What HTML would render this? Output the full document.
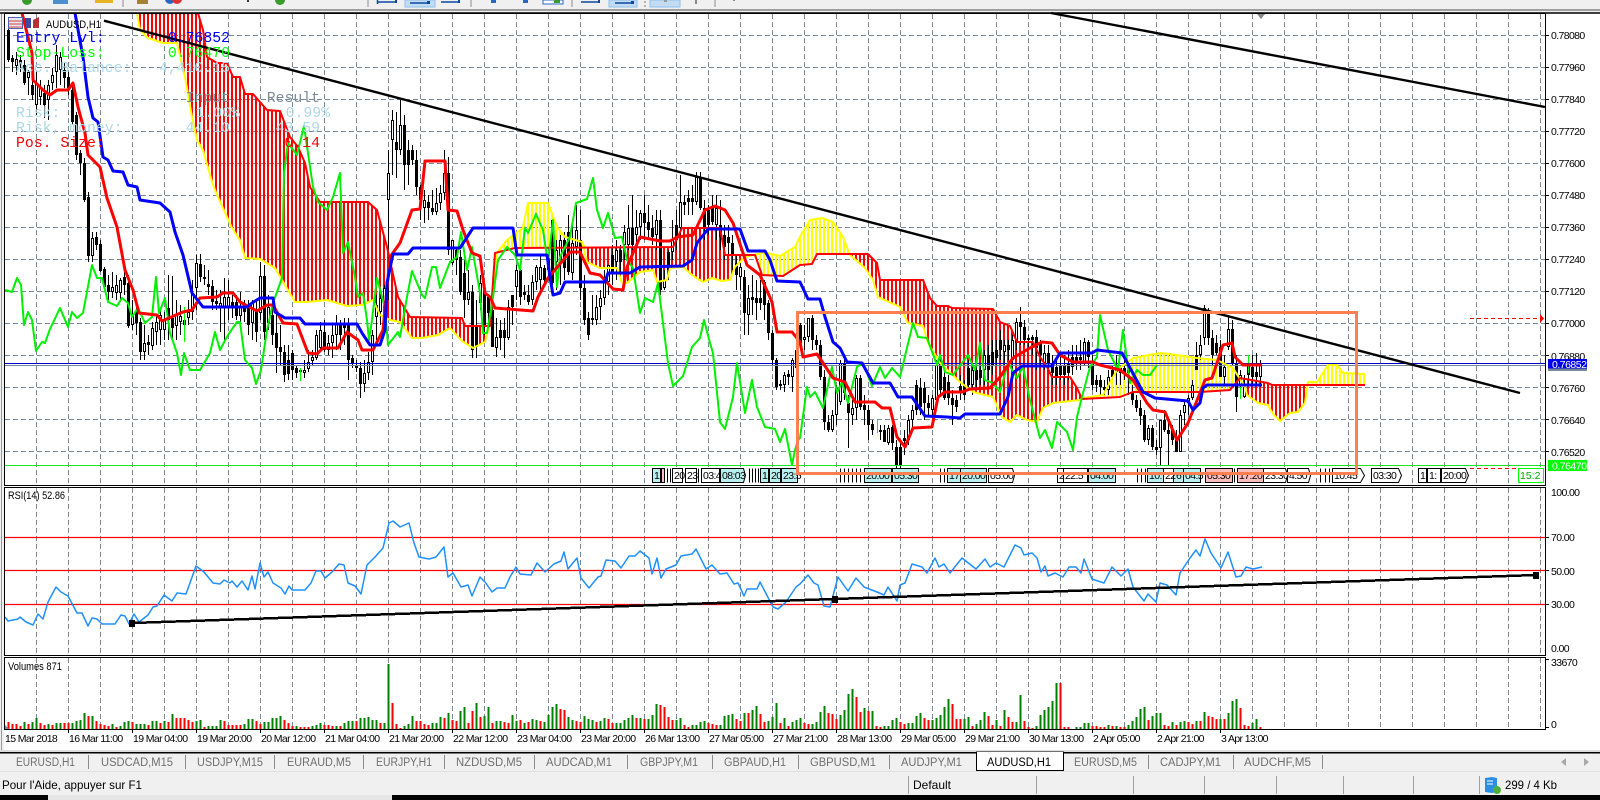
<!DOCTYPE html>
<html><head><meta charset="utf-8"><title>AUDUSD,H1</title>
<style>
html,body{margin:0;padding:0;background:#fff;width:1600px;height:800px;overflow:hidden}
svg{position:absolute;left:0;top:0;display:block}
text{font-family:"Liberation Sans",sans-serif;font-size:10px;fill:#000}
.l{fill:none;stroke-linejoin:round}
.m{font-family:"Liberation Mono",monospace;font-size:14.8px}
.a text{font-size:10.5px;letter-spacing:-.62px}
.t{font-size:11.5px;fill:#6f6f6f}
.b text{font-size:10.5px;letter-spacing:-.6px}
</style></head><body>
<svg width="1600" height="800" viewBox="0 0 1600 800" xmlns="http://www.w3.org/2000/svg">
<defs>
<pattern id="hr" patternUnits="userSpaceOnUse" x="7" y="0" width="4" height="8"><rect width="2" height="8" fill="#f00"/></pattern>
<pattern id="hy" patternUnits="userSpaceOnUse" x="7" y="0" width="4" height="8"><rect width="2" height="8" fill="#ff0"/></pattern>
</defs>
<!-- toolbar -->
<rect width="1600" height="10" fill="#f0f0f0"/>
<rect y="9" width="1600" height="2" fill="#a0a0a0"/>
<rect y="11" width="1600" height="2" fill="#f0f0f0"/>
<g>
<circle cx="27" cy="0" r="5" fill="#3a9a2a"/><rect x="53" y="0" width="15" height="4" fill="#4c8fcb"/><rect x="95" y="0" width="18" height="3" fill="#e6b422"/>
<rect x="137" y="0" width="11" height="4" fill="#a5822f"/><circle cx="170" cy="-1" r="5" fill="#2a66c8"/><circle cx="177" cy="-1" r="5" fill="#d33"/><circle cx="280" cy="0" r="5" fill="#3a9a2a"/>
<rect x="247" y="0" width="2" height="2" fill="#333"/>
<path d="M123 0v7M368 0v7M471 0v7M572 0v7M715 0v7" stroke="#8c8c8c" stroke-width="1"/>
<rect x="405" y="0" width="30" height="7" fill="#c3dcf3" stroke="#8fc1ee"/><rect x="609" y="0" width="28" height="7" fill="#c3dcf3" stroke="#8fc1ee"/><rect x="650" y="0" width="30" height="7" fill="#c3dcf3" stroke="#8fc1ee"/>
<path d="M378 2h19M377.500 0v4M410 3h19M441 2h19M581 2h19M615 3h18" stroke="#0d47a1" stroke-width="1.500"/>
<rect x="395" y="0" width="2" height="3" fill="#0d47a1"/><rect x="427" y="1" width="3" height="3" fill="#0d47a1"/><rect x="458" y="0" width="2" height="3" fill="#0d47a1"/><rect x="598" y="0" width="2" height="3" fill="#0d47a1"/><rect x="631" y="1" width="3" height="3" fill="#0d47a1"/>
<rect x="491" y="0" width="5" height="3" fill="#2a66c8"/><rect x="523" y="0" width="5" height="3" fill="#2a66c8"/><rect x="543" y="0" width="20" height="4" fill="#fff" stroke="#2a66c8"/><rect x="554" y="0" width="6" height="3" fill="#3a9a2a"/>
<rect x="644" y="1" width="2" height="2" fill="#b5b5b5"/><rect x="644" y="5" width="2" height="2" fill="#b5b5b5"/><rect x="664" y="0" width="3" height="2" fill="#999"/><rect x="695" y="0" width="2" height="4" fill="#888"/><rect x="733" y="0" width="2" height="1" fill="#888"/>
</g>
<rect y="13" width="4" height="740" fill="#f0f0f0"/><rect x="1" y="13" width="1" height="740" fill="#9a9a9a"/>
<!-- grid -->
<path d="M36.500 14V485M68.500 14V485M100.500 14V485M132.500 14V485M164.500 14V485M196.500 14V485M228.500 14V485M260.500 14V485M292.500 14V485M324.500 14V485M356.500 14V485M388.500 14V485M420.500 14V485M452.500 14V485M484.500 14V485M516.500 14V485M548.500 14V485M580.500 14V485M612.500 14V485M644.500 14V485M676.500 14V485M708.500 14V485M740.500 14V485M772.500 14V485M804.500 14V485M836.500 14V485M868.500 14V485M900.500 14V485M932.500 14V485M964.500 14V485M996.500 14V485M1028.500 14V485M1060.500 14V485M1092.500 14V485M1124.500 14V485M1156.500 14V485M1188.500 14V485M1220.500 14V485M1252.500 14V485M1284.500 14V485M1316.500 14V485M1348.500 14V485M1380.500 14V485M1412.500 14V485M1444.500 14V485M1476.500 14V485M1508.500 14V485M1540.500 14V485
M36.500 488V655M68.500 488V655M100.500 488V655M132.500 488V655M164.500 488V655M196.500 488V655M228.500 488V655M260.500 488V655M292.500 488V655M324.500 488V655M356.500 488V655M388.500 488V655M420.500 488V655M452.500 488V655M484.500 488V655M516.500 488V655M548.500 488V655M580.500 488V655M612.500 488V655M644.500 488V655M676.500 488V655M708.500 488V655M740.500 488V655M772.500 488V655M804.500 488V655M836.500 488V655M868.500 488V655M900.500 488V655M932.500 488V655M964.500 488V655M996.500 488V655M1028.500 488V655M1060.500 488V655M1092.500 488V655M1124.500 488V655M1156.500 488V655M1188.500 488V655M1220.500 488V655M1252.500 488V655M1284.500 488V655M1316.500 488V655M1348.500 488V655M1380.500 488V655M1412.500 488V655M1444.500 488V655M1476.500 488V655M1508.500 488V655M1540.500 488V655
M36.500 658V729M68.500 658V729M100.500 658V729M132.500 658V729M164.500 658V729M196.500 658V729M228.500 658V729M260.500 658V729M292.500 658V729M324.500 658V729M356.500 658V729M388.500 658V729M420.500 658V729M452.500 658V729M484.500 658V729M516.500 658V729M548.500 658V729M580.500 658V729M612.500 658V729M644.500 658V729M676.500 658V729M708.500 658V729M740.500 658V729M772.500 658V729M804.500 658V729M836.500 658V729M868.500 658V729M900.500 658V729M932.500 658V729M964.500 658V729M996.500 658V729M1028.500 658V729M1060.500 658V729M1092.500 658V729M1124.500 658V729M1156.500 658V729M1188.500 658V729M1220.500 658V729M1252.500 658V729M1284.500 658V729M1316.500 658V729M1348.500 658V729M1380.500 658V729M1412.500 658V729M1444.500 658V729M1476.500 658V729M1508.500 658V729M1540.500 658V729" stroke="#778899" stroke-width="1" stroke-dasharray="5 3" fill="none"/>
<path d="M5 35.500H1545M5 67.500H1545M5 99.500H1545M5 131.500H1545M5 163.500H1545M5 195.500H1545M5 227.500H1545M5 259.500H1545M5 291.500H1545M5 323.500H1545M5 355.500H1545M5 387.500H1545M5 419.500H1545M5 451.500H1545" stroke="#778899" stroke-width="1" stroke-dasharray="5 3" fill="none"/>
<!-- cloud hatch -->
<polygon fill="url(#hr)" points="137,14 198,14 203,30 207,57 217,63 227,63 233,77 240,77 245,94 253,94 267,110 280,111 290,137 298,147 305,163 310,187 320,202 368,202 377,210 387,247 398,297 410,317 462,318 465,326 490,326 485,342 473,348 462,341 450,328 438,335 422,338 412,338 400,322 390,320 380,315 373,300 362,305 347,306 327,300 307,302 295,302 282,280 275,268 260,259 245,258 240,240 232,228 218,197 213,185 203,150 197,140 192,117 185,77 177,43 163,43 148,38 140,30"/>
<polygon fill="url(#hy)" points="497,253 507,240 523,228 528,203 548,203 557,227 565,237 582,242 587,248 515,248"/>
<polygon fill="url(#hr)" points="587,248 673,247 682,228 720,228 725,255 745,255 745,257 735,267 730,280 722,281 712,278 703,282 692,275 683,267 670,268 667,280 657,282 653,270 640,272 627,283 622,283 617,268 600,268 587,262"/>
<polygon fill="url(#hy)" points="745,257 762,253 767,253 780,256 795,247 800,237 810,220 822,218 833,222 843,237 850,254 817,254 812,264 800,265 783,276 762,275 755,255"/>
<polygon fill="url(#hr)" points="850,254 868,254 877,263 880,280 923,280 930,298 937,306 948,306 952,308 993,309 1000,322 1010,326 1017,342 1033,342 1040,357 1047,367 1052,377 1070,377 1077,388 1082,399 1053,403 1043,408 1037,422 1027,420 1017,415 1010,422 1002,417 993,397 973,392 960,382 940,363 928,343 923,326 908,323 900,307 878,297 873,280 865,268"/>
<polygon fill="url(#hy)" points="1083,398 1103,395 1117,370 1133,358 1160,353 1170,354 1197,358 1217,360 1233,368 1243,382 1230,390 1200,392 1133,392 1120,397"/>
<polygon fill="url(#hr)" points="1240,378 1268,383 1272,385 1308,385 1308,387 1305,403 1298,412 1290,413 1280,421 1273,414 1268,405 1258,403 1247,395 1245,387"/>
<polygon fill="url(#hy)" points="1308,382 1317,382 1328,365 1337,365 1343,373 1365,374 1365,385 1308,385"/>
<!-- candles -->
<g transform="translate(.5,0)" shape-rendering="crispEdges">
<path fill="none" stroke="#000" stroke-width="1" d="M8 28V62M12 55V72M16 52V75M20 55V72M24 60V85M28 70V95M32 75V100M36 72V115M40 80V105M44 85V118M48 80V120M52 68V90M56 45V88M60 52V85M64 62V88M68 72V95M72 85V125M76 112V160M80 150V175M84 158V202M88 192V262M92 232V262M96 232V250M100 240V272M104 267V290M108 275V300M112 272V298M116 275V300M120 278V302M124 272V295M128 275V328M132 300V330M136 305V335M140 318V360M144 325V360M148 335V355M152 322V350M156 315V345M160 310V345M164 312V340M168 275V340M172 276V340M176 300V340M180 305V335M184 315V340M188 300V325M192 280V320M196 255V310M200 254V282M204 265V285M208 270V295M212 280V310M216 290V310M220 290V332M224 278V340M228 280V320M232 295V318M236 295V320M240 292V325M244 300V322M248 300V335M252 300V340M256 300V342M260 262V320M264 265V340M268 295V330M272 300V345M276 310V373M280 325V365M284 345V382M288 345V380M292 350V380M296 365V378M300 368V375M304 360V378M308 350V372M312 350V365M316 330V360M320 322V350M324 320V352M328 335V355M332 325V358M336 315V350M340 320V350M344 318V345M348 318V380M352 355V368M356 360V372M360 362V398M364 360V392M368 352V380M372 330V375M376 295V340M380 290V325M384 285V320M388 150V300M392 110V175M396 112V178M400 100V155M404 115V190M408 140V185M412 145V165M416 150V195M420 185V220M424 190V223M428 195V220M432 190V215M436 188V215M440 185V210M444 150V200M448 157V255M452 240V265M456 248V275M460 250V295M464 260V318M468 270V305M472 285V358M476 300V358M480 275V310M484 285V335M488 295V325M492 305V347M496 318V357M500 320V350M504 318V358M508 300V340M512 295V325M516 265V300M520 265V305M524 285V300M528 285V305M532 275V305M536 265V290M540 255V290M544 265V285M548 255V280M552 220V285M556 240V290M560 235V285M564 232V280M568 215V275M572 225V280M576 205V255M580 210V300M584 275V325M588 312V340M592 295V325M596 295V325M600 290V320M604 270V305M608 265V295M612 245V285M616 240V280M620 245V275M624 225V260M628 205V250M632 195V250M636 210V245M640 210V240M644 195V240M648 205V240M652 215V245M656 210V250M660 210V295M664 270V290M668 250V280M672 220V260M676 210V250M680 175V235M684 195V215M688 190V215M692 185V215M696 172V205M700 172V210M704 200V240M708 205V235M712 195V225M716 195V240M720 200V250M724 225V260M728 225V255M732 235V270M736 255V290M740 260V290M744 270V335M748 285V335M752 275V315M756 280V320M760 280V310M764 280V320M768 300V340M772 330V365M776 358V390M780 380V390M784 372V392M788 370V385M792 358V392M796 340V375M800 323V345M804 325V350M808 318V342M812 315V350M816 335V350M820 340V380M824 370V430M828 415V432M832 410V432M836 385V425M840 360V405M844 355V400M848 395V448M852 400V425M856 375V420M860 375V410M864 395V425M868 405V440M872 420V435M880 425V440M884 425V442M888 425V445M892 425V450M896 440V468M900 440V468M904 430V455M908 415V445M912 405V430M916 380V415M920 378V415M924 382V420M928 395V415M932 395V418M936 360V410M940 355V395M944 365V400M948 375V405M952 390V425M956 395V412M960 375V400M964 380V400M968 360V390M972 365V395M976 365V390M980 365V385M984 350V385M988 345V380M992 340V375M996 340V365M1000 330V360M1004 340V365M1008 340V360M1012 335V370M1016 318V350M1020 307V345M1024 320V345M1028 335V350M1032 335V355M1036 330V370M1040 340V365M1044 345V370M1048 345V370M1052 355V385M1056 360V385M1060 355V380M1064 355V385M1068 350V380M1072 345V375M1076 345V370M1080 340V370M1084 338V365M1088 340V368M1092 355V390M1096 375V392M1100 375V395M1104 380V395M1108 370V395M1112 365V380M1116 355V385M1120 365V385M1124 360V380M1128 370V395M1132 385V405M1136 395V412M1140 400V425M1144 410V442M1148 425V445M1152 425V450M1156 440V455M1160 420V465M1164 410V432M1168 420V465M1172 425V445M1176 430V452M1180 410V452M1184 400V425M1188 395V415M1192 380V400M1196 342V370M1200 335V360M1204 305V345M1208 308V345M1212 330V365M1216 335V355M1220 340V377M1224 355V385M1228 315V350M1232 320V365M1236 355V412M1240 370V395M1244 375V398M1248 355V385M1252 355V385M1256 353V385M1260 360V387"/>
<path fill="none" stroke="#000" stroke-width="3" d="M8 30V60M12 58V62M16 59V66M20 60V65M24 65V83M28 72V78M32 85V95M36 83V105M40 88V97M44 93V105M48 85V100M52 75V83M56 55V72M60 57V70M64 70V78M68 77V88M72 90V122M76 115V155M80 153V163M84 163V200M88 197V256M92 238V256M96 237V245M100 244V271M104 269V287M108 285V292M112 287V292M116 285V293M120 280V293M124 277V285M128 283V326M132 315V325M136 312V323M140 322V352M144 343V352M148 342V345M152 328V346M156 322V332M160 315V330M164 320V330M168 308V320M172 318V328M176 315V326M180 316V322M184 320V325M188 312V318M192 293V312M196 263V288M200 264V277M204 277V279M208 284V287M212 286V302M216 301V304M220 303V307M224 297V307M228 297V307M232 302V308M236 302V316M240 307V316M244 308V312M248 307V325M252 303V323M256 311V332M260 276V313M264 276V332M268 307V323M272 315V335M276 333V348M280 347V352M284 352V375M288 360V374M292 353V370M296 368V373M300 370V372M304 370V373M308 362V369M312 357V361M316 335V358M320 330V348M324 332V350M328 343V350M332 335V343M336 323V335M340 323V335M344 323V328M348 323V360M352 358V363M356 365V368M360 368V384M364 373V384M368 362V373M372 335V362M376 305V317M380 298V312M384 288V302M388 173V200M392 120V140M396 142V150M400 125V150M404 125V165M408 150V165M412 150V160M416 160V187M420 187V200M424 200V208M428 202V208M432 208V212M436 203V212M440 193V203M444 173V193M448 173V250M452 240V263M456 250V260M460 257V292M464 273V300M468 292V300M472 292V350M476 325V347M480 283V303M484 290V327M488 297V313M492 310V347M496 337V348M500 330V338M504 330V338M508 307V338M512 295V307M516 270V287M520 270V297M524 292V295M528 295V302M532 282V300M536 267V282M540 267V280M544 268V280M548 258V270M552 220V283M556 250V262M560 240V260M564 240V268M568 232V272M572 243V273M576 230V247M580 240V288M584 288V320M588 318V335M592 318V320M596 307V320M600 298V307M604 278V298M608 265V282M612 255V272M616 250V262M620 250V262M624 232V245M628 228V245M632 228V245M636 227V235M640 213V227M644 213V223M648 222V230M652 228V237M656 220V235M660 220V290M664 280V288M668 252V270M672 240V252M676 225V240M680 202V228M684 202V205M688 198V202M692 198V202M696 177V202M700 178V208M704 208V228M708 210V225M712 208V222M716 208V225M720 225V237M724 235V247M728 237V243M732 243V255M736 263V275M740 267V277M744 277V313M748 298V315M752 297V300M756 298V303M760 298V303M764 282V305M768 303V333M772 333V360M776 360V387M780 384V386M784 375V385M788 374V377M792 360V377M796 350V368M800 325V343M804 337V340M808 318V337M812 318V340M816 340V345M820 345V377M824 377V422M828 422V430M832 415V430M836 388V415M840 363V402M844 363V393M848 403V413M852 408V415M856 378V408M860 378V407M864 405V410M868 410V425M872 424V430M880 430V432M884 430V442M888 428V443M892 427V443M896 447V466M900 447V466M904 438V441M908 420V440M912 410V420M916 385V410M920 388V407M924 388V403M928 403V408M932 398V410M936 365V400M940 363V390M944 377V398M948 382V398M952 398V405M956 400V407M960 386V392M964 385V395M968 368V385M972 370V385M976 370V380M980 370V378M984 355V370M988 355V370M992 352V365M996 350V358M1000 340V350M1004 345V352M1008 345V350M1012 340V360M1016 322V343M1020 322V327M1024 327V340M1028 338V340M1032 337V340M1036 337V348M1040 343V355M1044 353V363M1048 353V363M1052 363V373M1056 367V377M1060 365V375M1064 365V375M1068 363V373M1072 357V367M1076 357V363M1080 357V360M1084 342V363M1088 342V357M1092 363V385M1096 380V385M1100 380V387M1104 387V390M1108 377V390M1112 370V377M1116 365V372M1120 368V373M1124 368V373M1128 370V373M1132 392V400M1136 400V408M1140 408V416M1144 415V440M1148 428V440M1152 428V447M1156 447V450M1160 420V448M1164 420V430M1168 430V434M1172 430V440M1176 440V452M1180 415V452M1184 405V413M1188 398V403M1192 385V398M1196 355V370M1200 345V355M1204 308V338M1208 313V338M1212 338V355M1216 343V353M1220 347V377M1224 367V377M1228 329V347M1232 329V363M1236 363V397M1240 375V385M1244 387V397M1248 365V375M1252 367V377M1256 372V377M1260 365V377"/>
<path fill="none" stroke="#fff" stroke-width="1" d="M16 60V65M28 73V77M36 84V104M40 89V96M48 86V99M52 76V82M56 56V71M60 58V69M92 239V255M112 288V291M116 286V292M120 281V292M132 316V324M144 344V351M152 329V345M156 323V331M160 316V329M164 321V329M176 316V325M180 317V321M188 313V317M192 294V311M196 264V287M220 304V306M224 298V306M228 298V306M240 308V315M252 304V322M260 277V312M268 308V322M304 371V372M308 363V368M312 358V360M316 336V357M320 331V347M328 344V349M332 336V342M336 324V334M364 374V383M368 363V372M372 336V361M376 306V316M380 299V311M384 289V301M388 174V199M392 121V139M400 126V149M424 201V207M436 204V211M440 194V202M444 174V192M452 241V262M468 293V299M480 284V302M496 338V347M508 308V337M516 271V286M532 283V299M536 268V281M540 268V279M556 251V261M560 241V259M572 244V272M576 231V246M596 308V319M600 299V306M604 279V297M608 266V281M616 251V261M624 233V244M628 229V244M636 228V234M640 214V226M656 221V234M664 281V287M672 241V251M680 203V227M696 178V201M716 209V224M740 268V276M748 299V314M780 385V385M784 376V384M792 361V376M804 338V339M808 319V336M832 416V429M836 389V414M840 364V401M852 409V414M856 379V407M888 429V442M908 421V439M912 411V419M932 399V409M936 366V399M972 371V384M984 356V369M1004 346V351M1012 341V359M1016 323V342M1044 354V362M1084 343V362M1108 378V389M1128 371V372M1148 429V439M1160 421V447M1180 416V451M1184 406V412M1188 399V402M1192 386V397M1200 346V354M1204 309V337M1224 368V376M1228 330V346M1240 376V384M1244 388V396M1260 366V376"/>
<path fill="none" stroke="#0f0" stroke-width="1" d="M184 307V342M300 368V381M877 420V433M1240 387V399M1248 355V373"/>
</g>
<!-- horizontal price lines -->
<rect x="5" y="365" width="1540" height="1" fill="#778899"/><rect x="5" y="363" width="1540" height="1" fill="#0000cd"/>
<rect x="5" y="465" width="1540" height="1" fill="#1ee61e"/>
<!-- cloud edges -->
<polyline class="l" stroke="#ff0" stroke-width="2" points="137,13 140,30 148,38 163,43 177,43 185,77 192,117 197,140 203,150 213,185 218,197 232,228 240,240 245,258 260,259 275,268 282,280 295,302 307,302 327,300 347,306 362,305 373,300 380,315 390,320 400,322 412,338 422,338 438,335 450,328 462,341 473,348 485,342 490,323 497,253 507,240 523,228 528,203 548,203 557,227 565,237 582,242 587,262 600,268 617,268 622,283 627,283 640,272 653,270 657,282 667,280 670,268 683,267 692,275 703,282 712,278 722,281 730,280 735,267 745,257 762,253 767,253 780,256 795,247 800,237 810,220 822,218 833,222 843,237 850,255 865,268 873,280 878,297 900,307 908,323 923,326 928,343 940,363 960,382 973,392 993,397 1002,417 1010,422 1017,415 1027,420 1037,422 1043,408 1053,403 1080,400 1083,398 1103,395 1117,370 1133,358 1160,353 1170,354 1197,358 1217,360 1233,368 1245,387 1247,395 1258,403 1268,405 1273,414 1280,421 1290,413 1298,412 1305,403 1308,382 1317,382 1328,365 1337,365 1343,373 1365,374"/>
<polyline class="l" stroke="#f00" stroke-width="2" points="198,13 203,30 207,57 217,63 227,63 233,77 240,77 245,94 253,94 267,110 280,111 290,137 298,147 305,163 310,187 320,202 368,202 377,210 387,247 398,297 410,317 462,318 465,326 490,326 495,253 515,248 673,247 682,228 720,228 725,255 755,255 762,275 783,276 800,265 812,264 817,254 868,254 877,263 880,280 923,280 930,298 937,306 948,306 952,308 993,309 1000,322 1010,326 1017,342 1033,342 1040,357 1047,367 1052,377 1070,377 1077,388 1082,399 1120,397 1133,392 1200,392 1230,390 1240,378 1268,383 1272,385 1365,385"/>
<!-- chikou -->
<polyline class="l" stroke="#00f000" stroke-width="2" points="5,290 12,292 17,278 21,285 24,325 28,312 32,320 36,351 42,342 45,343 50,329 60,308 68,327 72,312 77,318 83,313 92,265 97,278 102,278 108,302 117,306 122,298 128,303 132,317 138,308 145,323 152,317 156,277 159,313 165,298 170,333 177,353 181,375 184,353 190,370 200,370 210,353 215,332 220,350 228,335 237,322 240,322 245,360 252,368 256,384 261,370 267,330 273,303 282,278 284,173 288,143 297,155 304,126 313,187 318,202 327,210 333,197 340,173 343,253 348,242 355,277 358,297 363,293 367,320 369,340 372,320 377,278 385,308 388,345 398,332 400,337 407,297 412,271 422,295 425,298 432,267 436,267 440,288 450,262 457,257 461,232 467,270 472,247 480,293 483,333 487,333 493,297 498,260 507,247 515,255 520,270 525,228 528,233 536,214 543,230 548,263 553,220 557,287 560,257 570,237 576,203 587,199 593,178 597,210 603,228 608,213 615,238 622,237 627,260 633,268 640,313 645,298 653,302 658,283 668,363 673,386 683,376 692,347 700,338 704,320 710,343 713,353 720,422 725,429 733,397 737,363 745,413 752,380 757,407 765,427 775,429 780,442 785,429 792,465 795,450 798,440 800,438 807,387 810,397 815,392 823,408 832,367 837,393 842,382 848,403 857,367 863,363 872,386 880,367 885,378 892,368 900,377 913,323 918,337 927,338 937,365 940,355 945,372 953,375 968,355 975,370 980,343 985,380 993,383 1000,392 1008,363 1017,378 1023,367 1030,400 1040,438 1045,430 1052,448 1057,422 1067,432 1073,450 1077,417 1083,393 1090,367 1097,357 1100,315 1108,350 1118,370 1123,330 1130,383 1137,370 1143,375 1150,375 1157,365"/>
<!-- tenkan red -->
<polyline class="l" stroke="#f00" stroke-width="3" points="22,13 32,53 33,80 43,90 50,95 57,90 68,90 73,83 78,107 85,133 88,155 100,167 107,198 117,227 125,270 133,290 139,313 157,315 162,321 183,312 192,310 200,298 217,297 223,293 233,293 240,302 257,311 267,305 273,305 283,323 297,324 308,353 317,354 323,348 338,348 347,332 358,340 362,350 373,350 383,330 390,257 400,243 412,210 420,209 425,161 445,161 448,210 457,211 463,230 472,253 480,256 485,293 490,297 495,308 533,311 538,297 548,278 570,252 580,252 590,273 600,275 613,289 623,290 627,267 640,237 660,241 670,241 677,237 693,235 705,210 715,206 725,210 733,223 747,265 760,275 772,302 777,332 792,332 800,342 803,357 817,354 823,363 833,378 845,382 855,402 875,402 882,408 890,408 897,437 905,447 913,428 932,427 938,397 945,392 962,392 970,389 990,388 1000,377 1013,358 1030,348 1042,342 1052,343 1060,355 1073,362 1093,362 1100,365 1120,370 1133,380 1147,403 1153,410 1165,412 1177,440 1188,423 1200,393 1205,380 1212,378 1223,345 1232,343 1235,357 1243,365 1262,365"/>
<!-- kijun blue -->
<polyline class="l" stroke="#00f" stroke-width="3" points="75,13 83,57 88,97 93,118 98,122 103,157 108,160 113,171 123,172 128,185 137,187 140,200 160,203 170,212 175,232 183,255 192,293 203,307 247,307 252,303 260,298 273,298 275,312 285,318 300,318 305,324 357,324 362,333 370,345 380,345 385,330 387,283 393,254 408,254 413,248 460,248 473,228 513,228 517,255 547,255 550,277 553,295 560,293 565,282 605,282 608,273 630,273 640,267 683,266 692,260 697,243 708,229 740,229 748,251 765,251 770,260 777,281 800,282 808,299 820,299 825,317 833,342 840,348 847,362 862,363 873,383 890,383 898,397 912,397 925,416 947,417 960,418 965,414 1000,414 1008,397 1013,373 1022,366 1052,366 1060,353 1092,353 1097,350 1122,353 1143,392 1155,398 1188,401 1193,410 1200,403 1203,388 1207,385 1262,385"/>
<!-- trendlines -->
<path d="M104 20.700L1520 393M1051 13L1545 107" stroke="#000" stroke-width="2.400" fill="none"/>
<!-- arrows -->
<path d="M1470 318.500H1540M1470 468.500H1543" stroke="#f00" stroke-dasharray="4 3" fill="none"/>
<polygon points="1540,314 1544,318.500 1540,323" fill="#f00"/>
<polygon points="1257,14 1265,14 1261,19" fill="#888"/>
<!-- overlay text -->
<g>
<text class="m" x="16" y="42" style="fill:#00f">Entry Lvl:</text><text class="m" x="230" y="42" text-anchor="end" style="fill:#00f">0.76852</text>
<text class="m" x="16" y="57" style="fill:#0f0">Stop-Loss:</text><text class="m" x="230" y="57" text-anchor="end" style="fill:#0f0">0.76470</text>
<text class="m" x="16" y="72" style="fill:#add8e6">Acc. Balance:</text><text class="m" x="230" y="72" text-anchor="end" style="fill:#add8e6">4,410.15</text>
<text class="m" x="230" y="102" text-anchor="end" style="fill:#7d8b99">Input</text><text class="m" x="320" y="102" text-anchor="end" style="fill:#7d8b99">Result</text>
<text class="m" x="16" y="117" style="fill:#add8e6">Risk:</text><text class="m" x="240" y="117" text-anchor="end" style="fill:#add8e6">1.00%</text><text class="m" x="330" y="117" text-anchor="end" style="fill:#add8e6">0.99%</text>
<text class="m" x="16" y="132" style="fill:#add8e6">Risk, money:</text><text class="m" x="230" y="132" text-anchor="end" style="fill:#add8e6">44.10</text><text class="m" x="320" y="132" text-anchor="end" style="fill:#add8e6">43.59</text>
<text class="m" x="16" y="147" style="fill:#f00">Pos. Size:</text><text class="m" x="320" y="147" text-anchor="end" style="fill:#f00">0.14</text>
</g>
<!-- chart icons -->
<rect x="8.500" y="17.500" width="14" height="11" fill="#e8e8f5" stroke="#5560b0"/><path d="M9 21h13M9 24h13M9 27h13" stroke="#d04040"/>
<path d="M25 18h6v10h-6z" fill="#3c4aa0"/><path d="M33 20l6-3v11h-6z" fill="#b93030"/>
<text x="46" y="28" textLength="55" lengthAdjust="spacingAndGlyphs" style="font-size:11px">AUDUSD,H1</text>
<!-- bottom-of-chart labels -->
<g stroke="#000" stroke-width="1">
<path fill="#b8f0f0" d="M652.500 468.500h8v14h-8zM720.500 468.500h23l2 7-2 7h-23zM760.500 468.500h8v14h-8zM769.500 468.500h11v14h-11zM781.500 468.500h16v14h-16zM864.500 468.500h27v14h-27zM892.500 468.500h26v14h-26zM947.500 468.500h13v14h-13zM960.500 468.500h26v14h-26zM1088.500 468.500h27v14h-27zM1147.500 468.500h16v14h-16zM1173.500 468.500h10v14h-10zM1183.500 468.500h17v14h-17z"/>
<path fill="#fff" d="M672.500 468.500h10v14h-10zM685.500 468.500h11v14h-11zM701.500 468.500h18v14h-18zM988.500 468.500h24l2 7-2 7h-24zM1057.500 468.500h6v14h-6zM1063.500 468.500h24v14h-24zM1163.500 468.500h10v14h-10zM1263.500 468.500h22l2 7-2 7h-22zM1287.500 468.500h21l2 7-2 7h-21zM1332.500 468.500h28l4 7-4 7h-28zM1371.500 468.500h27l3 7-3 7h-27zM1418.500 468.500h8v14h-8zM1427.500 468.500h13v14h-13zM1441.500 468.500h24l3 7-3 7h-24z"/>
<path fill="#ffbdbd" d="M1205.500 468.500h27v14h-27zM1237.500 468.500h26v14h-26zM661.500 468.500h3v14h-3z"/>
<path fill="none" d="M667.500 468.500v14M670.500 468.500v14M698.500 468.500v14M749.500 468.500v14M752.500 468.500v14M755.500 468.500v14M758.500 468.500v14M840.500 468.500v14M844.500 468.500v14M848.500 468.500v14M852.500 468.500v14M856.500 468.500v14M860.500 468.500v14M940.500 468.500v14M944.500 468.500v14M1137.500 468.500v14M1141.500 468.500v14M1145.500 468.500v14M1234.500 468.500v14M1320.500 468.500v14M1325.500 468.500v14M1329.500 468.500v14"/>
</g>
<g class="b">
<text x="654" y="479">1</text><text x="674" y="479">20</text><text x="687" y="479">23</text><text x="703" y="479">03:4</text><text x="722" y="479">08:03</text><text x="762" y="479">1</text><text x="771" y="479">20</text><text x="783" y="479">23:5</text><text x="866" y="479">20:00</text><text x="894" y="479">05:30</text><text x="949" y="479">17</text><text x="962" y="479">20:00</text><text x="990" y="479">05:00</text><text x="1059" y="479">2</text><text x="1065" y="479">22:5</text><text x="1090" y="479">04:00</text><text x="1149" y="479">10:</text><text x="1165" y="479">22</text><text x="1176" y="479">6</text><text x="1185" y="479">04:5</text><text x="1207" y="479">05:30</text><text x="1239" y="479">17:20</text><text x="1265" y="479">23:30</text><text x="1289" y="479">4:50</text><text x="1334" y="479">10:45</text><text x="1373" y="479">03:30</text><text x="1420" y="479">1</text><text x="1429" y="479">1:</text><text x="1443" y="479">20:00</text>
</g>
<rect x="1518.500" y="468.500" width="25" height="14" fill="#fff" stroke="#0f0"/><text x="1520" y="479" style="fill:#0a0;font-size:10.5px">15:2</text>
<!-- orange rectangle -->
<path d="M797.500 312.500h559v161h-559z" fill="none" stroke="#ff7f50" stroke-width="3"/>
<!-- RSI -->
<path d="M5 537.500H1545M5 570.500H1545M5 604.500H1545" stroke="#f00" stroke-width="1.200"/>
<polyline class="l" stroke="#1e90ff" stroke-width="1.500" points="5,617 8,621 18,619 20,617 26,622 33,625 38,614 43,619 48,602 56,587 61,592 68,596 77,613 82,613 88,626 92,618 97,619 102,624 115,624 121,615 125,616 129,624 134,614 139,622 148,615 153,607 157,606 164,595 172,601 177,593 186,594 196,566 204,572 213,583 220,584 224,580 230,583 232,581 237,587 242,581 248,590 252,576 255,589 260,563 264,577 268,572 273,583 281,588 285,594 289,586 292,590 305,590 311,583 316,571 321,571 325,578 332,572 339,564 344,565 348,583 355,586 361,594 367,565 375,557 383,548 389,523 393,521 400,527 409,523 414,543 419,557 429,559 436,557 444,547 448,577 453,573 461,587 468,585 472,596 480,577 485,582 492,592 497,588 505,588 510,577 516,567 520,574 531,575 537,563 545,572 554,564 561,561 564,552 568,569 577,558 581,578 589,588 598,577 601,576 606,560 615,561 621,568 629,556 635,556 640,551 649,558 652,574 657,558 661,578 666,569 676,565 681,556 692,554 696,549 706,569 712,565 720,574 727,573 734,584 738,583 744,596 747,589 757,589 760,582 773,607 778,609 786,602 796,587 800,584 808,575 814,583 818,585 824,606 830,607 838,577 848,591 856,578 864,587 877,592 884,595 888,587 897,601 900,585 905,583 912,564 922,567 927,573 935,558 939,567 944,564 950,573 962,558 976,569 985,559 990,567 996,563 1004,567 1015,545 1021,548 1024,555 1032,553 1037,558 1041,572 1045,566 1048,576 1055,573 1063,577 1069,567 1076,567 1081,573 1084,559 1092,579 1104,583 1112,567 1121,576 1128,569 1133,587 1144,601 1148,594 1156,602 1160,583 1167,585 1176,595 1180,573 1190,558 1196,550 1200,556 1205,539 1211,553 1221,568 1228,552 1236,577 1241,576 1246,567 1253,569 1262,567"/>
<path d="M132 623L1536 575" stroke="#000" stroke-width="2.500" shape-rendering="crispEdges"/>
<rect x="129" y="620" width="6" height="7" fill="#000"/><rect x="832" y="596" width="6" height="7" fill="#000"/><rect x="1533" y="572" width="6" height="7" fill="#000"/>
<text x="8" y="499" textLength="57" lengthAdjust="spacingAndGlyphs" style="font-size:11px">RSI(14) 52.86</text>
<!-- volumes -->
<g transform="translate(.5,0)" shape-rendering="crispEdges">
<path fill="none" stroke="#008000" stroke-width="2" d="M24 729v-7M32 729v-7M36 729v-11M48 729v-5M56 729v-6M60 729v-6M72 729v-6M76 729v-8M80 729v-9M84 729v-16M92 729v-13M112 729v-5M120 729v-3M124 729v-7M128 729v-8M136 729v-5M140 729v-5M144 729v-5M152 729v-8M156 729v-8M164 729v-8M172 729v-15M196 729v-8M200 729v-9M208 729v-3M212 729v-3M216 729v-3M220 729v-9M244 729v-5M248 729v-10M252 729v-10M264 729v-7M268 729v-7M272 729v-11M276 729v-11M280 729v-13M296 729v-3M312 729v-3M316 729v-4M320 729v-6M336 729v-3M344 729v-6M348 729v-8M352 729v-8M360 729v-11M364 729v-11M368 729v-12M372 729v-9M376 729v-9M384 729v-6M388 729v-65M404 729v-3M408 729v-5M412 729v-13M432 729v-6M436 729v-6M440 729v-12M448 729v-16M460 729v-18M464 729v-22M476 729v-26M484 729v-13M488 729v-22M496 729v-8M500 729v-8M512 729v-14M516 729v-8M524 729v-6M532 729v-10M536 729v-9M544 729v-7M548 729v-14M552 729v-22M556 729v-25M568 729v-12M572 729v-9M584 729v-13M588 729v-10M592 729v-9M600 729v-8M604 729v-11M616 729v-6M620 729v-6M624 729v-9M628 729v-11M632 729v-14M640 729v-11M648 729v-10M652 729v-14M656 729v-25M676 729v-9M680 729v-11M692 729v-4M696 729v-4M700 729v-7M704 729v-8M720 729v-4M724 729v-13M728 729v-14M732 729v-15M744 729v-16M752 729v-19M756 729v-23M768 729v-8M772 729v-12M776 729v-26M784 729v-11M792 729v-7M796 729v-9M800 729v-11M812 729v-5M816 729v-7M820 729v-17M824 729v-23M840 729v-14M844 729v-19M848 729v-35M852 729v-40M864 729v-21M872 729v-18M884 729v-3M888 729v-3M892 729v-9M896 729v-11M908 729v-6M912 729v-6M916 729v-13M920 729v-16M932 729v-9M936 729v-11M940 729v-14M944 729v-22M948 729v-30M964 729v-10M968 729v-12M976 729v-5M980 729v-9M984 729v-17M996 729v-9M1004 729v-19M1016 729v-7M1020 729v-34M1036 729v-3M1040 729v-14M1044 729v-19M1048 729v-22M1052 729v-28M1056 729v-46M1076 729v-2M1080 729v-2M1084 729v-6M1088 729v-6M1108 729v-4M1116 729v-3M1128 729v-4M1132 729v-8M1136 729v-12M1140 729v-20M1144 729v-22M1152 729v-13M1156 729v-16M1160 729v-16M1172 729v-7M1180 729v-7M1184 729v-8M1196 729v-8M1204 729v-17M1220 729v-10M1228 729v-16M1232 729v-28M1236 729v-30M1252 729v-6M1256 729v-10"/>
<path fill="none" stroke="#f00" stroke-width="2" d="M8 729v-7M12 729v-5M16 729v-5M20 729v-3M28 729v-5M40 729v-6M44 729v-4M52 729v-4M64 729v-6M68 729v-6M88 729v-13M96 729v-8M100 729v-5M104 729v-4M108 729v-3M116 729v-2M132 729v-7M148 729v-4M160 729v-6M168 729v-7M176 729v-11M180 729v-11M184 729v-11M188 729v-9M192 729v-7M204 729v-2M224 729v-8M228 729v-4M232 729v-4M236 729v-4M240 729v-4M256 729v-8M260 729v-5M284 729v-9M288 729v-6M292 729v-3M300 729v-2M304 729v-2M308 729v-2M324 729v-4M328 729v-4M332 729v-3M340 729v-3M356 729v-8M380 729v-6M392 729v-26M396 729v-5M400 729v-1M416 729v-8M420 729v-8M424 729v-5M428 729v-4M444 729v-11M452 729v-9M456 729v-8M468 729v-6M472 729v-18M480 729v-12M492 729v-6M504 729v-7M508 729v-6M520 729v-9M528 729v-7M540 729v-8M560 729v-20M564 729v-19M576 729v-8M580 729v-7M596 729v-7M608 729v-10M612 729v-6M636 729v-11M644 729v-10M660 729v-24M664 729v-22M668 729v-12M672 729v-9M684 729v-4M688 729v-2M708 729v-6M712 729v-5M716 729v-4M736 729v-10M740 729v-8M748 729v-16M760 729v-15M764 729v-7M780 729v-6M788 729v-3M804 729v-6M808 729v-5M828 729v-16M832 729v-15M836 729v-10M856 729v-32M860 729v-17M868 729v-18M876 729v-3M880 729v-2M900 729v-7M904 729v-5M924 729v-11M928 729v-9M952 729v-25M956 729v-10M960 729v-10M972 729v-3M988 729v-13M992 729v-4M1000 729v-3M1008 729v-12M1012 729v-7M1024 729v-8M1028 729v-2M1032 729v-1M1060 729v-46M1064 729v-2M1068 729v-2M1092 729v-3M1096 729v-3M1100 729v-2M1104 729v-2M1112 729v-3M1120 729v-2M1124 729v-2M1148 729v-9M1164 729v-4M1168 729v-3M1176 729v-4M1188 729v-7M1192 729v-5M1200 729v-8M1208 729v-13M1212 729v-12M1216 729v-10M1224 729v-10M1240 729v-21M1244 729v-4M1248 729v-3M1260 729v-2"/>
</g>
<polygon points="5,725 9,729 5,729" fill="#778899"/>
<text x="8" y="670" textLength="54" lengthAdjust="spacingAndGlyphs" style="font-size:11px">Volumes 871</text>
<!-- pane borders -->
<path d="M4.500 13.500H1545.500V485.500H4.500ZM4.500 487.500H1545.500V655.500H4.500ZM4.500 657.500H1545.500V729.500H4.500Z" fill="none" stroke="#000" stroke-width="1"/>
<path d="M0 13h1600" stroke="#000" stroke-width="1.500"/>
<path d="M68.500 729v4M132.500 729v4M196.500 729v4M260.500 729v4M324.500 729v4M388.500 729v4M452.500 729v4M516.500 729v4M580.500 729v4M644.500 729v4M708.500 729v4M772.500 729v4M836.500 729v4M900.500 729v4M964.500 729v4M1028.500 729v4M1092.500 729v4M1156.500 729v4M1220.500 729v4M1545 35.500h4M1545 67.500h4M1545 99.500h4M1545 131.500h4M1545 163.500h4M1545 195.500h4M1545 227.500h4M1545 259.500h4M1545 291.500h4M1545 323.500h4M1545 355.500h4M1545 387.500h4M1545 419.500h4M1545 451.500h4M1545 537.500h4M1545 570.500h4M1545 604.500h4M1545 659.500h4M1545 727.500h4" stroke="#000"/>
<!-- axis labels -->
<g class="a">
<text x="1551" y="39">0.78080</text><text x="1551" y="71">0.77960</text><text x="1551" y="103">0.77840</text><text x="1551" y="135">0.77720</text><text x="1551" y="167">0.77600</text><text x="1551" y="199">0.77480</text><text x="1551" y="231">0.77360</text><text x="1551" y="263">0.77240</text><text x="1551" y="295">0.77120</text><text x="1551" y="327">0.77000</text><text x="1551" y="360">0.76880</text><text x="1551" y="392">0.76760</text><text x="1551" y="424">0.76640</text><text x="1551" y="456">0.76520</text>
<text x="1551" y="496">100.00</text><text x="1551" y="541">70.00</text><text x="1551" y="575">50.00</text><text x="1551" y="608">30.00</text><text x="1551" y="652">0.00</text>
<text x="1551" y="666">33670</text><text x="1551" y="728">0</text>
</g>
<rect x="1548" y="359" width="39" height="12" fill="#778899"/><rect x="1548" y="359" width="39" height="9.500" fill="#0000e6"/>
<text x="1552" y="368" style="fill:#fff;font-size:10.5px;letter-spacing:-.5px">0.76852</text>
<rect x="1548" y="460" width="39" height="11" fill="#0f0"/><text x="1552" y="469.500" style="fill:#fff;font-size:10.5px;letter-spacing:-.5px">0.76470</text>
<!-- dates -->
<g class="a">
<text x="5" y="742">15 Mar 2018</text><text x="69" y="742">16 Mar 11:00</text><text x="133" y="742">19 Mar 04:00</text><text x="197" y="742">19 Mar 20:00</text><text x="261" y="742">20 Mar 12:00</text><text x="325" y="742">21 Mar 04:00</text><text x="389" y="742">21 Mar 20:00</text><text x="453" y="742">22 Mar 12:00</text><text x="517" y="742">23 Mar 04:00</text><text x="581" y="742">23 Mar 20:00</text><text x="645" y="742">26 Mar 13:00</text><text x="709" y="742">27 Mar 05:00</text><text x="773" y="742">27 Mar 21:00</text><text x="837" y="742">28 Mar 13:00</text><text x="901" y="742">29 Mar 05:00</text><text x="965" y="742">29 Mar 21:00</text><text x="1029" y="742">30 Mar 13:00</text><text x="1093" y="742">2 Apr 05:00</text><text x="1157" y="742">2 Apr 21:00</text><text x="1221" y="742">3 Apr 13:00</text>
</g>
<!-- bottom bars -->
<rect y="750" width="1600" height="2" fill="#dcdcdc"/>
<rect y="752" width="1600" height="20" fill="#f0f0f0"/>
<rect y="752" width="1600" height="1.500" fill="#000"/>
<rect x="976.500" y="752" width="87" height="18.500" fill="#fff" stroke="#000"/>
<rect x="977" y="752" width="86" height="1.500" fill="#fff"/>
<path d="M88.500 755v14M185.500 755v14M274.500 755v14M363.500 755v14M444.500 755v14M534.500 755v14M627.500 755v14M712.500 755v14M798.500 755v14M889.500 755v14M1148.500 755v14M1233.500 755v14M1322.500 755v14" stroke="#8c8c8c"/>
<text class="t" x="16" y="766" textLength="59" lengthAdjust="spacingAndGlyphs">EURUSD,H1</text>
<text class="t" x="101" y="766" textLength="72" lengthAdjust="spacingAndGlyphs">USDCAD,M15</text>
<text class="t" x="197" y="766" textLength="66" lengthAdjust="spacingAndGlyphs">USDJPY,M15</text>
<text class="t" x="287" y="766" textLength="64" lengthAdjust="spacingAndGlyphs">EURAUD,M5</text>
<text class="t" x="376" y="766" textLength="56" lengthAdjust="spacingAndGlyphs">EURJPY,H1</text>
<text class="t" x="456" y="766" textLength="66" lengthAdjust="spacingAndGlyphs">NZDUSD,M5</text>
<text class="t" x="546" y="766" textLength="66" lengthAdjust="spacingAndGlyphs">AUDCAD,M1</text>
<text class="t" x="640" y="766" textLength="58" lengthAdjust="spacingAndGlyphs">GBPJPY,M1</text>
<text class="t" x="724" y="766" textLength="62" lengthAdjust="spacingAndGlyphs">GBPAUD,H1</text>
<text class="t" x="810" y="766" textLength="66" lengthAdjust="spacingAndGlyphs">GBPUSD,M1</text>
<text class="t" x="901" y="766" textLength="61" lengthAdjust="spacingAndGlyphs">AUDJPY,M1</text>
<text class="t" x="987" y="766" textLength="64" lengthAdjust="spacingAndGlyphs" style="fill:#000">AUDUSD,H1</text>
<text class="t" x="1074" y="766" textLength="63" lengthAdjust="spacingAndGlyphs">EURUSD,M5</text>
<text class="t" x="1160" y="766" textLength="61" lengthAdjust="spacingAndGlyphs">CADJPY,M1</text>
<text class="t" x="1244" y="766" textLength="67" lengthAdjust="spacingAndGlyphs">AUDCHF,M5</text>
<polygon points="1566,758 1561,762 1566,766" fill="#a8a8a8"/><polygon points="1584,758 1589,762 1584,766" fill="#a8a8a8"/>
<rect y="772" width="1600" height="23" fill="#f0f0f0"/>
<rect y="771" width="1600" height="1" fill="#e0e0e0"/>
<path d="M908.500 776v18M1036.500 776v18M1133.500 776v18M1204.500 776v18M1276.500 776v18M1343.500 776v18M1413.500 776v18M1479.500 776v18" stroke="#a0a0a0"/>
<text x="2" y="789" textLength="140" lengthAdjust="spacingAndGlyphs" style="font-size:12px">Pour l'Aide, appuyer sur F1</text>
<text x="913" y="789" textLength="38" lengthAdjust="spacingAndGlyphs" style="font-size:12px">Default</text>
<text x="1505" y="789" textLength="52" lengthAdjust="spacingAndGlyphs" style="font-size:12px">299 / 4 Kb</text>
<path d="M1485 778l7-1 5 1v14l-5 1-7-1z" fill="#2a8fe0"/><path d="M1487 781h6M1487 784h6" stroke="#fff"/>
<circle cx="1497" cy="790" r="4" fill="#4caf3a"/>
<rect y="795" width="1600" height="5" fill="#000"/><rect x="48" y="795" width="344" height="5" fill="#e6e6e6"/>
</svg>
</body></html>
